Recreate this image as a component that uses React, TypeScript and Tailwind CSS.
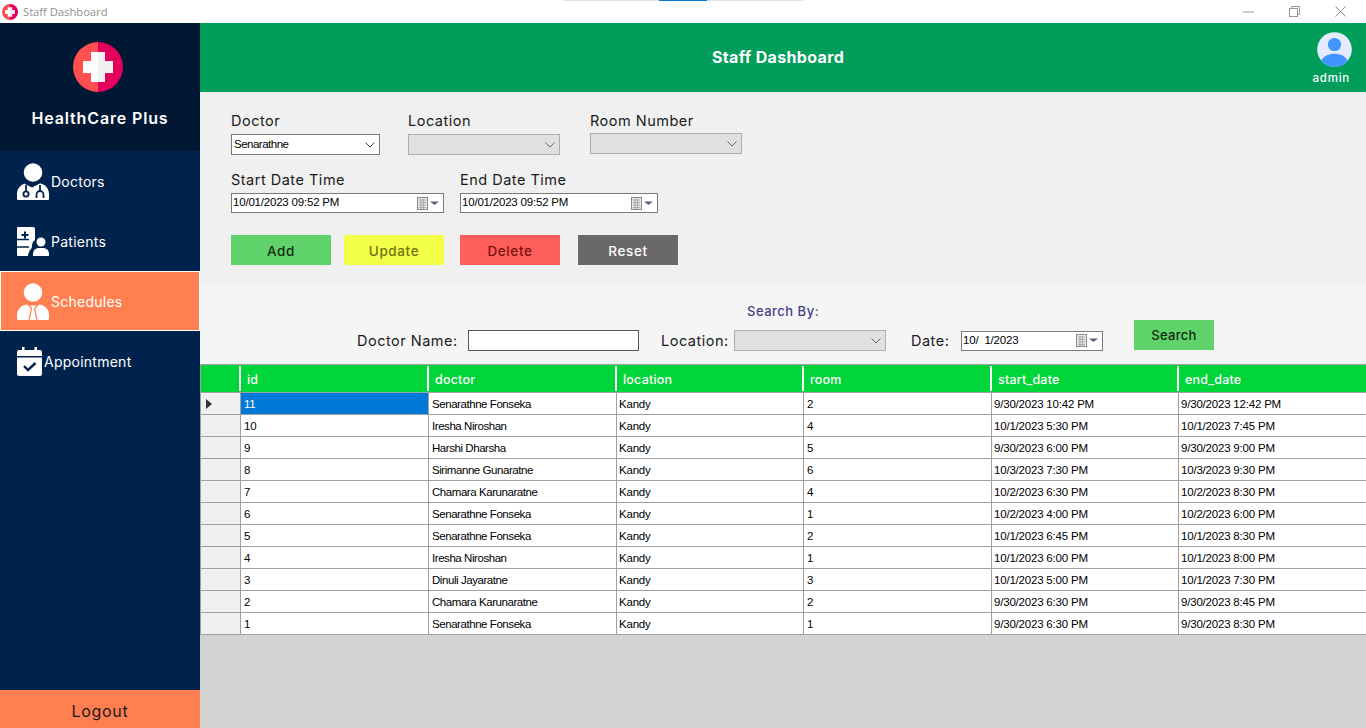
import React from "react";

const MT = "font-['Inter','Liberation_Sans',sans-serif]";
const MS = "font-['Liberation_Sans',Arial,sans-serif]";

function Logo({ size }: { size: number }) {
  return (
    <svg width={size} height={size} viewBox="0 0 50 50" className="block">
      <path d="M25 0a25 25 0 0 0 0 50z" fill="#ff4f4f" />
      <path d="M25 0a25 25 0 0 1 0 50z" fill="#e3005c" />
      <path d="M18 10h7v30h-7V31H10V19h8z" fill="#ffffff" />
      <path d="M25 10h7v9h8v12h-8v9h-7z" fill="#f0f0f0" />
    </svg>
  );
}

function DoctorIcon() {
  return (
    <svg width="32" height="37" viewBox="0 0 32 37" className="block">
      <circle cx="16" cy="9.500" r="9.300" fill="#fff" />
      <path d="M8 20.500C3 22 0 26 0 31v5a1 1 0 0 0 1 1h30a1 1 0 0 0 1-1v-5c0-5-3-9-8-10.500l-1 0-8 4-8-4z" fill="#fff" />
      <circle cx="9" cy="31" r="2.600" fill="none" stroke="#00234e" strokeWidth="1.800" />
      <path d="M9 28.500V22" stroke="#00234e" strokeWidth="1.800" />
      <path d="M19.500 35v-3.500a3.500 3.500 0 0 1 7 0V35" fill="none" stroke="#00234e" strokeWidth="1.800" />
      <path d="M23 28V22" stroke="#00234e" strokeWidth="1.800" />
    </svg>
  );
}

function PatientIcon() {
  return (
    <svg width="32" height="29" viewBox="0 0 32 29" className="block">
      <path d="M1 0h15a2 2 0 0 1 2 2v11a7 7 0 0 0-3 6c0 2-1 3-2 4-1 2-2 4-2 6H1a1 1 0 0 1-1-1V1a1 1 0 0 1 1-1z" fill="#fff" />
      <path d="M7 4.500h2v2.500h2.500v2H9v2.500H7V9H4.500V7H7z" fill="#00234e" />
      <path d="M0 12.500h12M0 20h12" stroke="#00234e" strokeWidth="1.300" />
      <circle cx="24" cy="15" r="4.500" fill="#fff" />
      <path d="M16 29v-2c0-4 3-6 6-6h4c3 0 6 2 6 6v2z" fill="#fff" />
    </svg>
  );
}

function SuitIcon() {
  return (
    <svg width="32" height="37" viewBox="0 0 32 37" className="block">
      <circle cx="16" cy="9.500" r="9.300" fill="#fff" />
      <path d="M9 21.500C3 23 0 27 0 32v4a1 1 0 0 0 1 1h30a1 1 0 0 0 1-1v-4c0-5-3-9-9-10.500l-3 1H12z" fill="#fff" />
      <path d="M11.500 22l3 3.500L12 37M20.500 22l-3 3.500L20 37" fill="none" stroke="#ff7f50" strokeWidth="1.200" />
    </svg>
  );
}

function CalendarIcon() {
  return (
    <svg width="25" height="29" viewBox="0 0 25 29" className="block">
      <path d="M5 0h2.500v3H17.500V0H20v3h3a2 2 0 0 1 2 2v4H0V5a2 2 0 0 1 2-2h3z" fill="#fff" />
      <path d="M0 10.500h25V27a2 2 0 0 1-2 2H2a2 2 0 0 1-2-2z" fill="#fff" />
      <path d="M7 19l4 4 7.500-7" fill="none" stroke="#00234e" strokeWidth="2.400" />
    </svg>
  );
}

function NavItem({ icon, label, gap, active }: { icon: React.ReactNode; label: string; gap: string; active?: boolean }) {
  return (
    <div className={`flex h-[60px] items-center pl-[17px] ${active ? "bg-[#ff7f50] border border-white" : ""}`}>
      <div className={active ? "-ml-px w-[34px]" : "w-[34px]"}>{icon}</div>
      <span className={`${gap} ${MT} pt-[2px] text-[14px] leading-none tracking-[0.25px] text-white`}>{label}</span>
    </div>
  );
}

function Chevron({ color = "#444" }: { color?: string }) {
  return (
    <svg width="10" height="6" viewBox="0 0 10 6" className="block">
      <path d="M.500.500 5 5 9.500.500" fill="none" stroke={color} strokeWidth="1" />
    </svg>
  );
}

function Combo({ value, disabled, w }: { value?: string; disabled?: boolean; w: string }) {
  return (
    <div className={`flex h-[21px] ${w} items-center justify-between border pl-[2px] pr-[4px] ${disabled ? "bg-[#e0e0e0] border-[#adadad]" : "bg-white border-[#7a7a7a]"}`}>
      <span className={`${MS} text-[11.500px] leading-none text-black tracking-[-0.5px]`}>{value}</span>
      <Chevron color={disabled ? "#666" : "#444"} />
    </div>
  );
}

function CalGlyph() {
  return (
    <svg width="23" height="13" viewBox="0 0 23 13" className="block">
      <rect x="0.500" y="0.500" width="10" height="12" fill="#e6e6e6" stroke="#8a8a8a" />
      <path d="M2 3h7M2 5.500h7M2 8h7M2 10.500h7M4 2v10M6.500 2v10" stroke="#a0a0a0" strokeWidth="0.800" />
      <path d="M13 4.500h9L17.500 8z" fill="#55607a" />
    </svg>
  );
}

function DatePick({ value, w }: { value: string; w: string }) {
  return (
    <div className={`flex h-[20px] ${w} items-center justify-between border border-[#7a7a7a] bg-white pl-[1px] pr-[3px]`}>
      <span className={`${MS} whitespace-pre text-[11.500px] leading-none text-black tracking-[-0.2px]`}>{value}</span>
      <CalGlyph />
    </div>
  );
}

function Btn({ label, cls }: { label: string; cls: string }) {
  return (
    <div className={`flex h-[30px] w-[100px] items-center justify-center pt-[2px] ${MT} text-[13.500px] font-medium tracking-[0.6px] ${cls}`}>{label}</div>
  );
}

const Label = ({ children, cls = "" }: { children: React.ReactNode; cls?: string }) => (
  <div className={`${MT} text-[14.500px] leading-[18px] tracking-[0.5px] text-[#1a1a1a] ${cls}`}>{children}</div>
);

const rows = [
  ["11", "Senarathne Fonseka", "2", "9/30/2023 10:42 PM", "9/30/2023 12:42 PM"],
  ["10", "Iresha Niroshan", "4", "10/1/2023 5:30 PM", "10/1/2023 7:45 PM"],
  ["9", "Harshi Dharsha", "5", "9/30/2023 6:00 PM", "9/30/2023 9:00 PM"],
  ["8", "Sirimanne Gunaratne", "6", "10/3/2023 7:30 PM", "10/3/2023 9:30 PM"],
  ["7", "Chamara Karunaratne", "4", "10/2/2023 6:30 PM", "10/2/2023 8:30 PM"],
  ["6", "Senarathne Fonseka", "1", "10/2/2023 4:00 PM", "10/2/2023 6:00 PM"],
  ["5", "Senarathne Fonseka", "2", "10/1/2023 6:45 PM", "10/1/2023 8:30 PM"],
  ["4", "Iresha Niroshan", "1", "10/1/2023 6:00 PM", "10/1/2023 8:00 PM"],
  ["3", "Dinuli Jayaratne", "3", "10/1/2023 5:00 PM", "10/1/2023 7:30 PM"],
  ["2", "Chamara Karunaratne", "2", "9/30/2023 6:30 PM", "9/30/2023 8:45 PM"],
  ["1", "Senarathne Fonseka", "1", "9/30/2023 6:30 PM", "9/30/2023 8:30 PM"],
];

const cols = "grid grid-cols-[40px_188px_188px_187px_188px_187px_187px]";
const headers = ["id", "doctor", "location", "room", "start_date", "end_date"];

export default function App() {
  return (
    <div className={`flex h-[728px] w-[1366px] flex-col overflow-hidden bg-white ${MT}`}>
      {/* title bar */}
      <div className="relative flex h-[23px] shrink-0 items-center bg-white pl-[2px]">
        <Logo size={16} />
        <span className="ml-[5px] font-['Open_Sans',sans-serif] text-[11.200px] leading-none text-[#8f8f8f]">Staff Dashboard</span>
        <div className="absolute left-[563px] top-0 flex h-px">
          <div className="h-px w-[96px] bg-[#e3e3e3]" />
          <div className="h-px w-[48px] bg-[#0078d7]" />
          <div className="h-px w-[97px] bg-[#e3e3e3]" />
        </div>
        <div className="ml-auto flex items-center">
          <svg width="11" height="2" viewBox="0 0 11 2" className="mr-[35px] block"><path d="M0 1h11" stroke="#999" /></svg>
          <svg width="11" height="11" viewBox="0 0 11 11" className="mr-[35px] block">
            <rect x=".5" y="2.500" width="8" height="8" fill="none" stroke="#999" />
            <path d="M2.500 2.500v-2h8v8h-2" fill="none" stroke="#999" />
          </svg>
          <svg width="11" height="11" viewBox="0 0 11 11" className="mr-[20px] block"><path d="M.5.500l10 10M10.500.500l-10 10" stroke="#888" /></svg>
        </div>
      </div>

      <div className="flex min-h-0 flex-1">
        {/* sidebar */}
        <aside className="flex w-[200px] shrink-0 flex-col bg-[#00234e]">
          <div className="flex h-[128px] flex-col items-center bg-[#001833] pt-[19px]">
            <div className="mr-[5px]"><Logo size={50} /></div>
            <div className={`mt-[16px] text-[16px] font-semibold leading-[20px] tracking-[0.85px] text-white ${MT}`}>HealthCare Plus</div>
          </div>
          <NavItem icon={<DoctorIcon />} label="Doctors" gap="" />
          <NavItem icon={<PatientIcon />} label="Patients" gap="" />
          <NavItem icon={<SuitIcon />} label="Schedules" gap="" active />
          <NavItem icon={<CalendarIcon />} label="Appointment" gap="-ml-[7px]" />
          <div className={`mt-auto flex h-[38px] items-center justify-center bg-[#ff7f50] pt-[4px] ${MT} text-[16px] tracking-[0.7px] text-[#1a1a1a]`}>Logout</div>
        </aside>

        {/* main */}
        <main className="flex min-w-0 flex-1 flex-col bg-[#d3d3d3]">
          <header className="flex h-[69px] shrink-0 items-center bg-[#009e5a] pr-[14px]">
            <div className={`ml-[512px] pb-[2px] text-[16px] font-bold tracking-[0.35px] text-white ${MT}`}>Staff Dashboard</div>
            <div className="ml-auto flex flex-col items-end self-start pt-[9px]">
              <svg width="35" height="35" viewBox="0 0 35 35" className="block">
                <circle cx="17.500" cy="17.500" r="17.300" fill="#e4ebff" />
                <circle cx="17.500" cy="12.500" r="6.600" fill="#4294ff" />
                <path d="M4.200 28.600C7 23.800 12 21.800 17.500 21.800s10.500 2 13.300 6.800a17.200 17.200 0 0 1-26.600 0z" fill="#4294ff" />
              </svg>
              <span className={`mr-[2px] mt-[4px] text-[11.500px] font-medium leading-[14px] tracking-[0.75px] text-white ${MT}`}>admin</span>
            </div>
          </header>

          {/* form */}
          <section className="h-[192px] shrink-0 bg-[#f0f0f0] pl-[31px] pt-[20px]">
            <div className="flex">
              <div className="mr-[28px]">
                <Label>Doctor</Label>
                <div className="mt-[4px]"><Combo value="Senarathne" w="w-[149px]" /></div>
              </div>
              <div className="mr-[30px]">
                <Label>Location</Label>
                <div className="mt-[4px]"><Combo disabled w="w-[152px]" /></div>
              </div>
              <div>
                <Label>Room Number</Label>
                <div className="mt-[3px]"><Combo disabled w="w-[152px]" /></div>
              </div>
            </div>
            <div className="mt-[16px] flex">
              <div className="mr-[16px]">
                <Label>Start Date Time</Label>
                <div className="mt-[4px]"><DatePick value="10/01/2023 09:52 PM" w="w-[213px]" /></div>
              </div>
              <div>
                <Label>End Date Time</Label>
                <div className="mt-[4px]"><DatePick value="10/01/2023 09:52 PM" w="w-[198px]" /></div>
              </div>
            </div>
            <div className="mt-[22px] flex">
              <Btn label="Add" cls="bg-[#5fd36a] text-[#0f2a12] mr-[13px]" />
              <Btn label="Update" cls="bg-[#f4ff47] text-[#6f7312] mr-[16px]" />
              <Btn label="Delete" cls="bg-[#ff5f5a] text-[#7a1010] mr-[18px]" />
              <Btn label="Reset" cls="bg-[#696969] text-white" />
            </div>
          </section>

          {/* search */}
          <section className="flex h-[80px] shrink-0 bg-[#f5f5f5] pl-[157px]">
            <div className="flex flex-col">
              <div className={`ml-[390px] mt-[19px] text-[13px] font-medium leading-[17px] tracking-[0.5px] text-[#483d8b] ${MT}`}>Search By:</div>
              <div className="mt-[10px] flex items-center">
                <Label cls="w-[111px]">Doctor Name:</Label>
                <div className="h-[21px] w-[171px] border border-[#555] bg-white" />
                <Label cls="ml-[22px] w-[73px]">Location:</Label>
                <Combo disabled w="w-[152px]" />
                <Label cls="ml-[25px] w-[50px]">Date:</Label>
                <DatePick value="10/  1/2023" w="w-[142px]" />
              </div>
            </div>
            <div className={`ml-[31px] mt-[36px] flex h-[30px] w-[80px] items-center justify-center pt-[1px] ${MT} bg-[#5fd36a] text-[13px] font-medium tracking-[0.3px] text-[#0f2a12]`}>Search</div>
          </section>

          {/* grid */}
          <div className="shrink-0 border-y border-l border-[#a0a0a0]">
            <div className={`${cols} h-[27px] bg-[#00d639]`}>
              <div className="my-[1px] border-r-2 border-white" />
              {headers.map((h, i) => (
                <div key={h} className={`flex items-center pl-[6px] pt-[3px] ${MT} text-[12.500px] font-medium tracking-[0.2px] text-white ${i < 5 ? "my-[1px] border-r-2 border-white" : ""}`}>{h}</div>
              ))}
            </div>
            {rows.map((r, i) => (
              <div key={r[0]} className={`${cols} h-[22px] ${MS} border-t border-[#a0a0a0] text-[11.500px] leading-none tracking-[-0.2px] text-black`}>
                <div className="flex items-center border-r border-[#a0a0a0] bg-[#f0f0f0] pl-[5px]">
                  {i === 0 && (
                    <svg width="6" height="10" viewBox="0 0 6 10" className="block"><path d="M0 0l6 5-6 5z" fill="#333" /></svg>
                  )}
                </div>
                <div className={`flex items-center border-r border-[#a0a0a0] pl-[3px] pt-[2px] ${i === 0 ? "bg-[#0078d7] text-white" : "bg-white"}`}>{r[0]}</div>
                <div className="flex items-center border-r border-[#a0a0a0] bg-white pl-[3px] pt-[2px] tracking-[-0.44px]">{r[1]}</div>
                <div className="flex items-center border-r border-[#a0a0a0] bg-white pl-[2px] pt-[2px]">Kandy</div>
                <div className="flex items-center border-r border-[#a0a0a0] bg-white pl-[3px] pt-[2px]">{r[2]}</div>
                <div className="flex items-center border-r border-[#a0a0a0] bg-white pl-[2px] pt-[2px]">{r[3]}</div>
                <div className="flex items-center bg-white pl-[2px] pt-[2px]">{r[4]}</div>
              </div>
            ))}
          </div>
        </main>
      </div>
    </div>
  );
}
